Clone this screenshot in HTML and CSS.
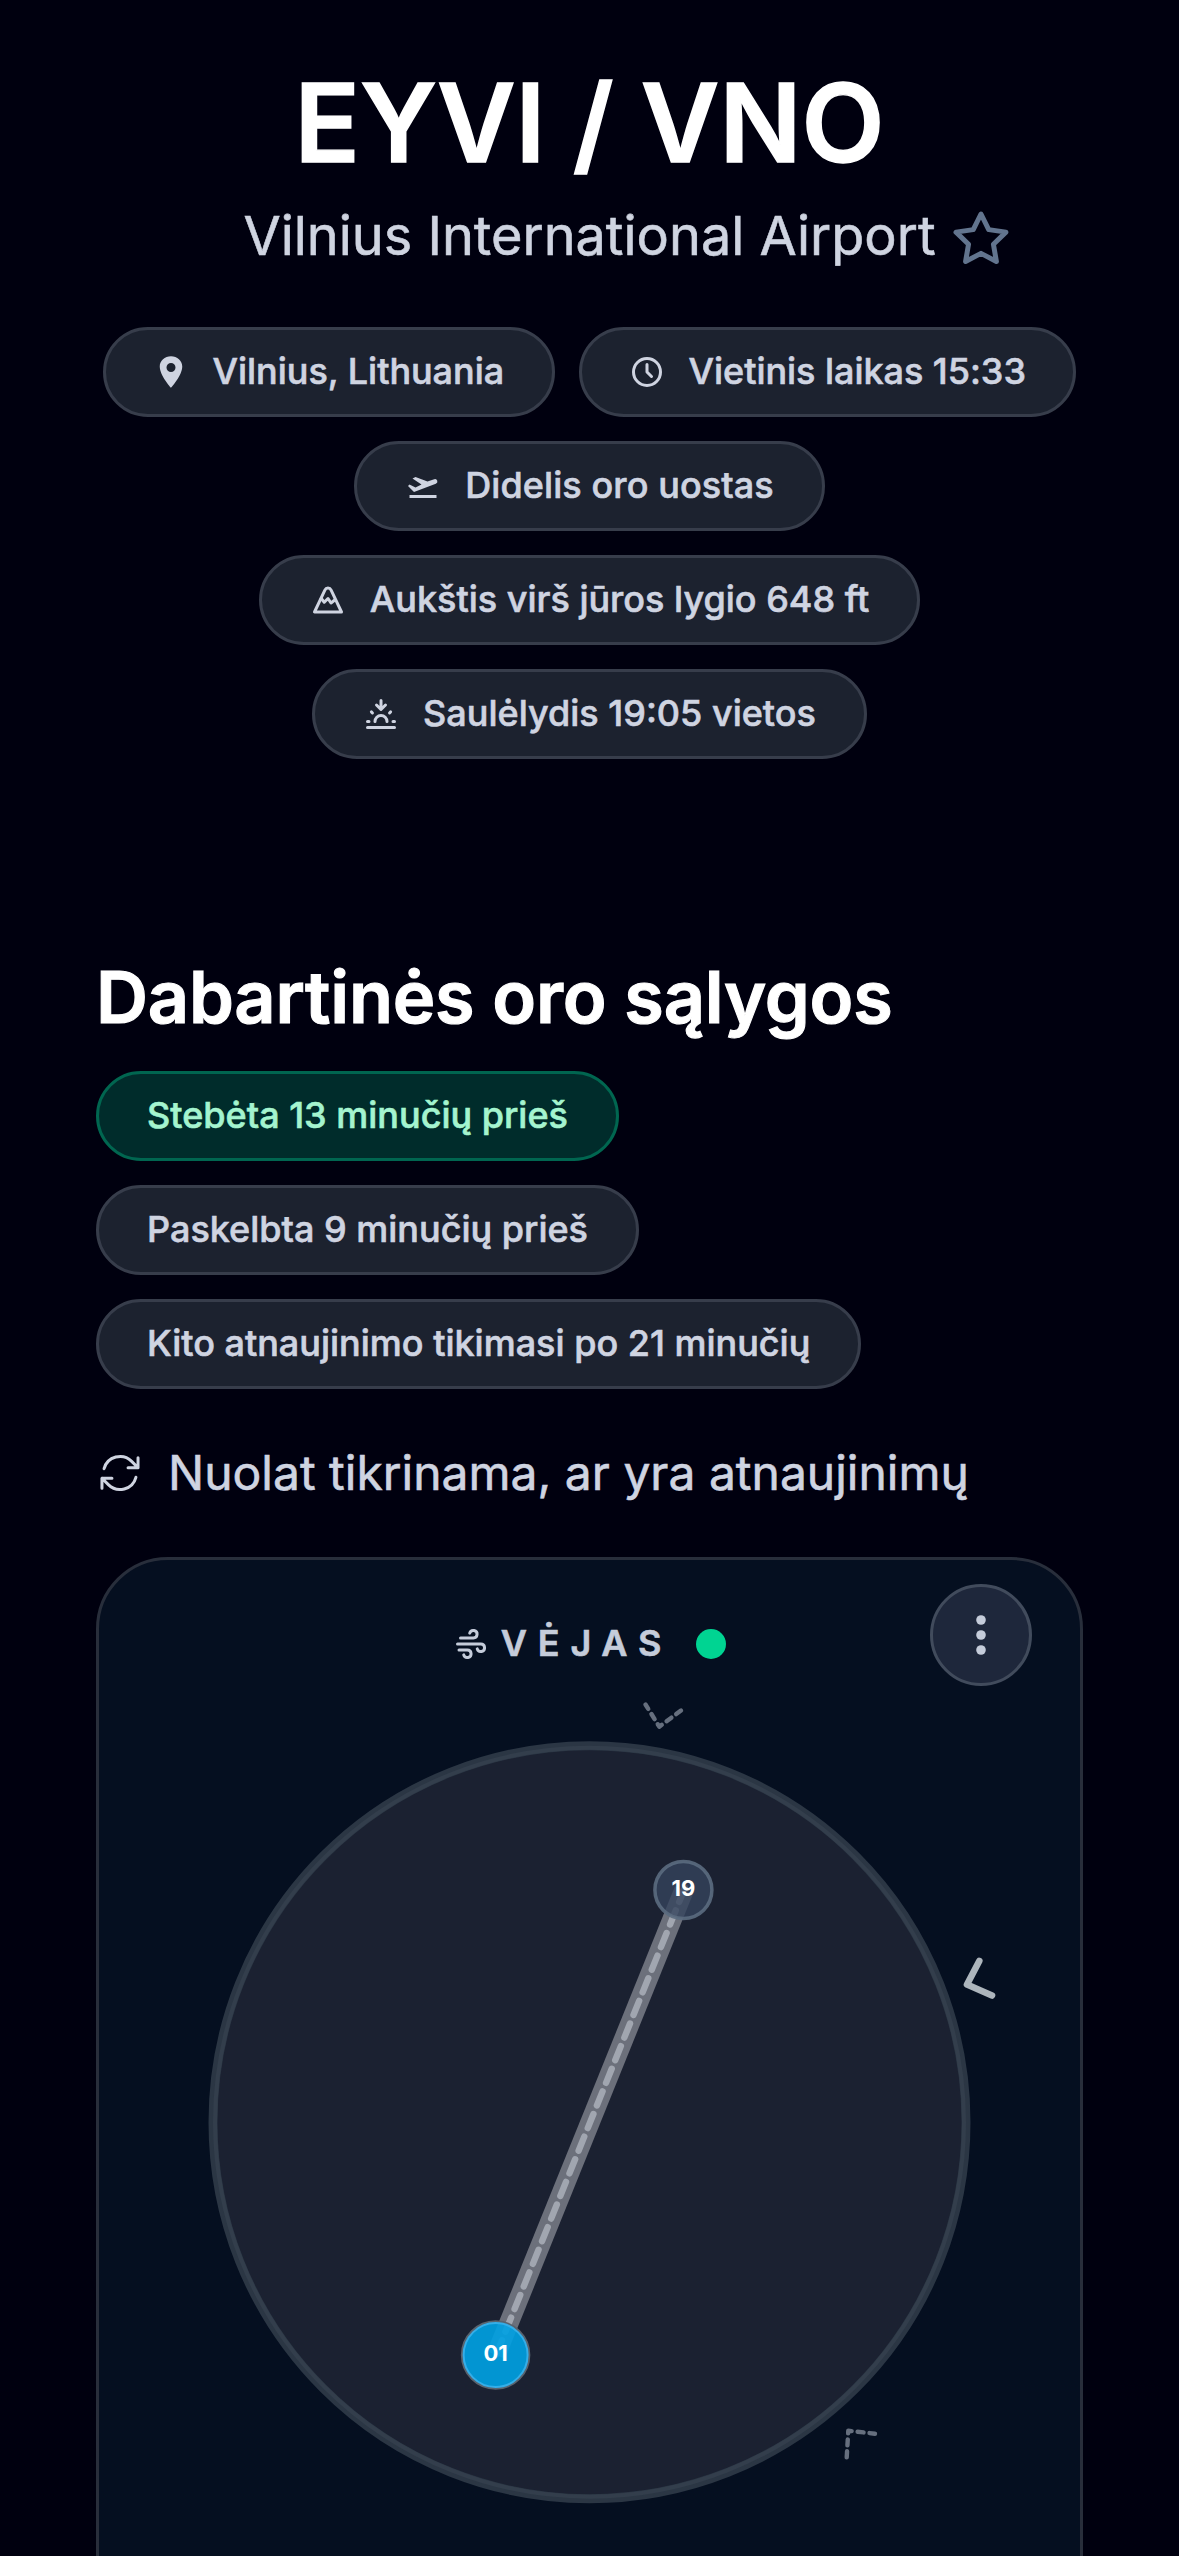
FILE: index.html
```html
<!DOCTYPE html>
<html lang="lt">
<head>
<meta charset="utf-8">
<title>EYVI / VNO</title>
<link rel="stylesheet" href="styles.css">
</head>
<body>
<header class="airport">
  <h1 class="airport-code">EYVI / VNO</h1>
  <div class="airport-name">
    <span>Vilnius International Airport</span>
    <svg class="star" viewBox="0 0 24 24"><path d="M12 17.75l-6.172 3.245l1.179 -6.873l-5 -4.867l6.9 -1l3.086 -6.253l3.086 6.253l6.9 1l-5 4.867l1.179 6.873z"/></svg>
  </div>
  <div class="facts">
    <div class="pill pill-tight"><svg class="icon solid" viewBox="0 0 512 512"><path d="M256 32C167.67 32 96 96.51 96 176c0 128 160 304 160 304s160-176 160-304c0-79.49-71.67-144-160-144zm0 224a64 64 0 1 1 64-64 64.07 64.07 0 0 1-64 64z"/></svg><span>Vilnius, Lithuania</span></div>
    <div class="pill pill-tight"><svg class="icon" viewBox="0 0 24 24"><circle cx="12" cy="12" r="9"/><path d="M12 7v5l3 3"/></svg><span>Vietinis laikas 15:33</span></div>
    <div class="pill pill-loose"><svg class="icon solid" viewBox="0 0 24 24"><path d="M3 18h18v2H3zm18.509-9.473a1.61 1.61 0 0 0-2.036-1.019L15 9 7 6 5 7l6 4-4 2-4-2-1 1 4 4 14.547-5.455a1.611 1.611 0 0 0 .962-2.018z"/></svg><span>Didelis oro uostas</span></div>
    <div class="pill"><svg class="icon" viewBox="0 0 24 24"><path d="M3 20h18l-6.921 -14.612a2.3 2.3 0 0 0 -4.158 0l-6.921 14.612z"/><path d="M7.5 11l2 2.5l2.5 -2.5l2 3l2.5 -2"/></svg><span>Aukštis virš jūros lygio 648 ft</span></div>
    <div class="pill"><svg class="icon" viewBox="0 0 24 24"><path d="M3 17h1m16 0h1m-15.4 -6.4l.7 .7m12.1 -.7l-.7 .7m-9.7 5.7a4 4 0 0 1 8 0M3 21h18M12 3v6l3 -3m-6 0l3 3"/></svg><span>Saulėlydis 19:05 vietos</span></div>
  </div>
</header>
<main class="weather">
  <h2 class="weather-title">Dabartinės oro sąlygos</h2>
  <div class="times">
    <div class="pill pill-fresh"><span>Stebėta 13 minučių prieš</span></div>
    <div class="pill"><span>Paskelbta 9 minučių prieš</span></div>
    <div class="pill"><span>Kito atnaujinimo tikimasi po 21 minučių</span></div>
  </div>
  <div class="checking">
    <svg class="refresh" viewBox="0 0 24 24"><path d="M16.023 9.348h4.992v-.001M2.985 19.644v-4.992m0 0h4.992m-4.993 0 3.181 3.183a8.25 8.25 0 0 0 13.803-3.7M4.031 9.865a8.25 8.25 0 0 1 13.803-3.7l3.181 3.182m0-4.991v4.99"/></svg>
    <span>Nuolat tikrinama, ar yra atnaujinimų</span>
  </div>
  <section class="wind-card">
    <div class="wind-head">
      <svg class="icon" viewBox="0 0 24 24"><path d="M5 8h8.5a2.5 2.5 0 1 0 -2.34 -3.24M3 12h15.5a2.5 2.5 0 1 1 -2.34 3.24M4 16h5.5a2.5 2.5 0 1 1 -2.34 3.24"/></svg>
      <span class="wind-label">VĖJAS</span>
      <span class="status-dot"></span>
    </div>
    <button class="menu" aria-label="Meniu"><svg viewBox="0 0 96 96"><circle cx="48" cy="33" r="4.8"/><circle cx="48" cy="48" r="4.8"/><circle cx="48" cy="63" r="4.8"/></svg></button>
    <svg class="compass" viewBox="99 1690 981 870">
      <circle class="dial" cx="589.5" cy="2122.2" r="376.5"/>
      <circle class="dial-inner" cx="589.5" cy="2122.2" r="374.5"/>
      <path class="tick-dashed" d="M681 1710.5L659.3 1726.7L645.5 1704.5"/>
      <path class="tick-dashed" d="M846.7 2457.3L848.3 2430.7L875 2433.7"/>
      <path class="tick" d="M979.3 1961L967 1984.5L992 1995.5"/>
      <path class="runway" d="M684 1890L496 2355"/>
      <path class="runway-line" d="M684.9 1887.8L496 2355"/>
      <circle class="end" cx="683.4" cy="1890" r="28.5"/>
      <circle class="end-halo" cx="495.6" cy="2355" r="33.5"/>
      <circle class="end-active" cx="495.6" cy="2355" r="32"/>
      <text class="end-label" x="683.4" y="1896">19</text>
      <text class="end-label" x="495.6" y="2361">01</text>
    </svg>
  </section>
</main>
</body>
</html>
```
FILE: styles.css
```css
* { box-sizing: border-box; }

body {
  margin: 0;
  height: 2556px;
  overflow: hidden;
  background: #00000f;
  color: #cfd4e1;
  font-family: Inter, "Liberation Sans", sans-serif;
  -webkit-text-stroke: 0.6px currentColor;
}

h1, h2 { margin: 0; color: #fff; }
svg { display: block; flex: none; }

.airport {
  padding: 63px 96px 0;
  display: flex;
  flex-direction: column;
  align-items: center;
}

.airport-code {
  font-size: 108px;
  line-height: 120px;
  font-weight: 600;
  -webkit-text-stroke: 1.4px #fff;
}

.airport-name {
  margin-top: 11px;
  display: flex;
  align-items: center;
  gap: 15px;
  font-size: 54px;
  line-height: 84px;
  white-space: nowrap;
}

.star {
  width: 60px;
  height: 60px;
  margin: 6px -75px 0 0;
  fill: none;
  stroke: #62748e;
  stroke-width: 2;
  stroke-linecap: round;
  stroke-linejoin: round;
}

.facts {
  margin-top: 49px;
  display: flex;
  flex-wrap: wrap;
  justify-content: center;
  gap: 24px;
}

.pill {
  height: 90px;
  padding: 0 48px;
  display: flex;
  align-items: center;
  gap: 24px;
  border: 3px solid #373d4b;
  border-radius: 45px;
  background: #1c222f;
  font-size: 36px;
  line-height: 48px;
  font-weight: 500;
  white-space: nowrap;
}

.pill span { padding-bottom: 2px; }
.pill-tight { padding: 0 47.5px; gap: 23.5px; letter-spacing: -0.04px; }
.pill-loose { letter-spacing: 0.08px; }

.pill-fresh {
  background: #002c2b;
  border-color: #006650;
  color: #a4f4cf;
}

.icon {
  width: 36px;
  height: 36px;
  fill: none;
  stroke: currentColor;
  stroke-width: 2;
  stroke-linecap: round;
  stroke-linejoin: round;
}

.icon.solid { fill: currentColor; stroke: none; }

.weather { padding: 193px 96px 0; }

.weather-title {
  font-size: 72px;
  line-height: 90px;
  font-weight: 600;
  letter-spacing: -0.22px;
  -webkit-text-stroke: 1.1px #fff;
}

.times {
  margin-top: 29px;
  display: flex;
  flex-direction: column;
  align-items: flex-start;
  gap: 24px;
}

.checking {
  margin-top: 48px;
  height: 72px;
  display: flex;
  align-items: center;
  gap: 24px;
  font-size: 48px;
  line-height: 72px;
  white-space: nowrap;
}

.refresh {
  width: 48px;
  height: 48px;
  fill: none;
  stroke: currentColor;
  stroke-width: 1.5;
  stroke-linecap: round;
  stroke-linejoin: round;
}

.wind-card {
  position: relative;
  margin-top: 48px;
  height: 1100px;
  padding-top: 60px;
  border: 3px solid #282e3b;
  border-radius: 72px;
  background: #050f20;
}

.wind-head {
  height: 48px;
  display: flex;
  align-items: center;
  justify-content: center;
  color: #c5ccda;
}

.wind-label {
  margin: 0 24px 2px 12px;
  font-size: 36px;
  line-height: 48px;
  font-weight: 600;
  letter-spacing: 10.8px;
}

.status-dot {
  width: 30px;
  height: 30px;
  border-radius: 50%;
  background: #00d492;
}

.menu {
  position: absolute;
  top: 24px;
  right: 48px;
  width: 102px;
  height: 102px;
  padding: 0;
  border: 3px solid #414b5c;
  border-radius: 50%;
  background: #1e273b;
}

.menu svg { width: 96px; height: 96px; fill: #c5ccda; }

.compass { width: 981px; height: 870px; margin-top: 22px; }

.dial { fill: #1b2131; stroke: #2b3644; stroke-width: 9; }
.dial-inner { fill: none; stroke: #333e4c; stroke-width: 4; }
.tick, .tick-dashed { fill: none; stroke-linecap: round; stroke-linejoin: round; }
.tick { stroke: #adb5bc; stroke-width: 6.6; }
.tick-dashed { stroke: #666f7e; stroke-width: 4.4; stroke-dasharray: 6 6; }
.runway { stroke: #6c707b; stroke-width: 19.5; }
.runway-line { stroke: #a1a6b0; stroke-width: 6.4; stroke-linecap: round; stroke-dasharray: 15.2 9.2; }
.end { fill: #34445d; fill-opacity: .8; stroke: #5b6b7f; stroke-opacity: .9; stroke-width: 3.5; }
.end-halo { fill: none; stroke: #59636e; stroke-width: 2.5; }
.end-active { fill: #00a0e2; fill-opacity: .91; stroke: #35aee8; stroke-width: 2; }
.end-label { fill: #fff; font-size: 22px; font-weight: 700; text-anchor: middle; -webkit-text-stroke: 0; }
```
